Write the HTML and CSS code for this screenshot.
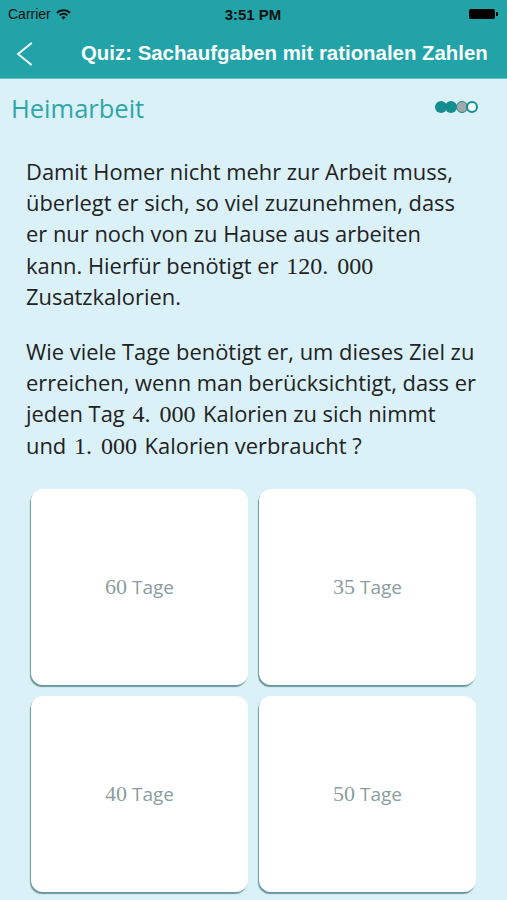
FILE: index.html
```html
<!DOCTYPE html>
<html lang="de">
<head>
<meta charset="utf-8">
<title>Quiz</title>
<link rel="stylesheet" href="styles.css">
</head>
<body>
<header class="top">
  <div class="status">
    <div class="carrier">Carrier
      <svg class="wifi" width="15" height="11" viewBox="0 0 15 11">
        <path d="M1 4 A9 9 0 0 1 14 4" fill="none" stroke="#111" stroke-width="2"/>
        <path d="M3.6 6.4 A5.5 5.5 0 0 1 11.4 6.4" fill="none" stroke="#111" stroke-width="2"/>
        <path d="M7.5 10.5 L5.4 8.3 A3 3 0 0 1 9.6 8.3 Z" fill="#111"/>
      </svg>
    </div>
    <div class="time">3:51 PM</div>
    <div class="battery"><span class="cell"></span><span class="nub"></span></div>
  </div>
  <nav class="nav">
    <svg class="back" width="20" height="24" viewBox="0 0 20 24">
      <path d="M17 1.5 L4 12 L17 22.5" fill="none" stroke="#e9f7f7" stroke-width="2.2" stroke-linecap="round" stroke-linejoin="round"/>
    </svg>
    <h1 class="title">Quiz: Sachaufgaben mit rationalen Zahlen</h1>
  </nav>
</header>
<main class="content">
  <div class="subhead">
    <h2 class="section">Heimarbeit</h2>
    <div class="dots"><span class="dot done"></span><span class="dot done"></span><span class="dot current"></span><span class="dot open"></span></div>
  </div>
  <div class="question">
    <p>Damit Homer nicht mehr zur Arbeit muss, überlegt er sich, so viel zuzunehmen, dass er nur noch von zu Hause aus arbeiten kann. Hierfür benötigt er <span class="num">120. 000</span> Zusatzkalorien.</p>
    <p>Wie viele Tage benötigt er, um dieses Ziel zu erreichen, wenn man berücksichtigt, dass er jeden Tag <span class="num">4. 000</span> Kalorien zu sich nimmt und <span class="num">1. 000</span> Kalorien verbraucht ?</p>
  </div>
  <div class="answers">
    <div class="card"><span class="num">60</span>&nbsp;Tage</div>
    <div class="card"><span class="num">35</span>&nbsp;Tage</div>
    <div class="card"><span class="num">40</span>&nbsp;Tage</div>
    <div class="card"><span class="num">50</span>&nbsp;Tage</div>
  </div>
</main>
</body>
</html>
```
FILE: styles.css
```css
* { box-sizing: border-box; }
html, body { margin: 0; padding: 0; }
body {
  width: 507px;
  height: 900px;
  overflow: hidden;
  background: #dbf1f8;
  font-family: "Open Sans", "DejaVu Sans", sans-serif;
}
.top {
  background: #22a3a8;
  border-bottom: 1px solid #5fc0c3;
}
.status {
  height: 28px;
  display: flex;
  align-items: center;
  justify-content: space-between;
  padding: 0 9px 0 8px;
  font-family: "Liberation Sans", Arial, sans-serif;
  color: #111;
}
.carrier {
  display: flex;
  align-items: center;
  gap: 5px;
  font-size: 14px;
  width: 120px;
}
.time {
  font-size: 15px;
  font-weight: bold;
}
.battery {
  width: 120px;
  display: flex;
  justify-content: flex-end;
  align-items: center;
}
.cell {
  width: 26px;
  height: 10px;
  background: #000;
  border-radius: 2px;
}
.nub {
  width: 2px;
  height: 4px;
  background: #000;
  margin-left: 1px;
  border-radius: 0 1px 1px 0;
}
.nav {
  height: 50px;
  display: flex;
  align-items: center;
  padding-left: 14px;
}
.back { flex: none; margin-top: 2px; }
.title {
  margin: 0 0 0 47px;
  font-family: "Liberation Sans", Arial, sans-serif;
  font-weight: bold;
  font-size: 20.4px;
  color: #fafefe;
  white-space: nowrap;
}
.subhead {
  display: flex;
  justify-content: space-between;
  align-items: center;
  padding: 10px 29px 0 11px;
  height: 48px;
}
.section {
  margin: 0;
  font-weight: 400;
  font-size: 25.5px;
  color: #2ea6a9;
  line-height: 34px;
}
.dots {
  display: flex;
  margin-top: -2px;
}
.dot {
  width: 12px;
  height: 12px;
  border-radius: 50%;
}
.dot + .dot { margin-left: -1.5px; }
.done { background: #138d8e; }
.current { background: #a3a9a9; border: 1.5px solid #138d8e; }
.open { background: #f2fbfc; border: 2px solid #138d8e; }
.question {
  padding: 28.8px 28px 0 26px;
  font-size: 21.9px;
  line-height: 31.3px;
  color: #222;
}
.question p { margin: 0 0 23.6px; }
.question p:last-child { margin-bottom: 0; }
.num {
  font-family: "Liberation Serif", "DejaVu Serif", serif;
  font-size: 24px;
  line-height: 1;
  word-spacing: 3px;
  margin: 0 2px;
}
.answers {
  display: grid;
  grid-template-columns: 1fr 1fr;
  grid-auto-rows: 196px;
  gap: 11px;
  padding: 28px 31px 0 31px;
}
.card {
  background: #fff;
  border-radius: 12px;
  box-shadow: -1px 2px 1px rgba(70, 120, 125, 0.75);
  display: flex;
  align-items: center;
  justify-content: center;
  color: #8b9d9e;
  font-size: 19px;
}
.card .num { font-size: 22px; margin: 0; }
```
